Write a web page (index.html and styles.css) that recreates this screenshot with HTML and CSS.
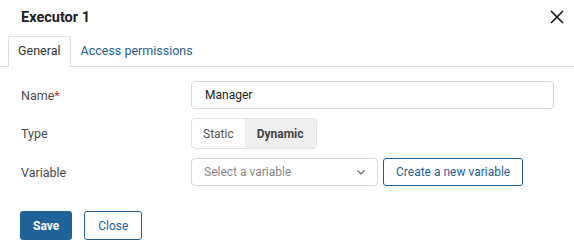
FILE: index.html
```html
<!DOCTYPE html>
<html lang="en">
<head>
    <meta charset="UTF-8">
    <title>Executor 1</title>
    <link rel="stylesheet" href="styles.css">
</head>
<body>

<div class="dialog">
    <div class="header">
        <h2>Executor 1</h2>
        <button class="close-x" aria-label="Close">
            <svg width="14" height="14" viewBox="0 0 14 14">
                <path d="M1 1 L13 13 M13 1 L1 13" stroke="#111" stroke-width="1.6" fill="none"/>
            </svg>
        </button>
    </div>

    <div class="tabs">
        <div class="tab active">General</div>
        <div class="tab">Access permissions</div>
    </div>

    <div class="form">
        <div class="row">
            <label>Name<span class="req">*</span></label>
            <input class="input" type="text" value="Manager">
        </div>
        <div class="row">
            <label>Type</label>
            <div class="segment">
                <span class="seg">Static</span>
                <span class="seg selected">Dynamic</span>
            </div>
        </div>
        <div class="row">
            <label>Variable</label>
            <div class="controls">
                <div class="select">
                    <span>Select a variable</span>
                    <svg width="8" height="5" viewBox="0 0 8 5">
                        <path d="M0.5 0.5 L4 4 L7.5 0.5" stroke="#666" stroke-width="1.1" fill="none"/>
                    </svg>
                </div>
                <button class="btn-outline">Create a new variable</button>
            </div>
        </div>
    </div>

    <div class="footer">
        <button class="btn-primary">Save</button>
        <button class="btn-secondary">Close</button>
    </div>
</div>

</body>
</html>
```

FILE: styles.css
```css
body {
    margin: 0;
    font-family: Roboto, 'Liberation Sans', Arial, sans-serif;
    font-size: 12px;
    color: #333;
    background: #ffffff;
}
.dialog {
    width: 574px;
    height: 240px;
    overflow: hidden;
}
.header {
    display: flex;
    justify-content: space-between;
    align-items: center;
    height: 34px;
    padding: 0 9px 0 21px;
}
.header h2 {
    margin: 0;
    font-size: 14.5px;
    font-weight: 700;
    color: #222;
}
.close-x {
    border: none;
    background: none;
    padding: 0;
    width: 16px;
    height: 16px;
    display: flex;
    align-items: center;
    justify-content: center;
}
.tabs {
    display: flex;
    padding: 2px 0 0 8px;
    border-bottom: 1px solid #dedede;
}
.tab {
    padding: 0 9px;
    height: 29px;
    line-height: 28px;
    font-size: 12.5px;
    color: #1f5f93;
    border: 1px solid transparent;
    border-bottom: none;
}
.tab.active {
    color: #333;
    border-color: #dedede;
    border-radius: 3px 3px 0 0;
    background: #fff;
    margin-bottom: -1px;
    height: 30px;
}
.form {
    padding: 14px 20px 0 21px;
    display: flex;
    flex-direction: column;
    gap: 9px;
}
.row {
    display: flex;
    align-items: center;
}
.row label {
    width: 170px;
    font-size: 12.5px;
    color: #4a4a4a;
}
.req {
    color: #c0392b;
}
.input {
    width: 363px;
    height: 28px;
    box-sizing: border-box;
    border: 1px solid #d6d6d6;
    border-radius: 4px;
    padding: 0 13px;
    font-family: inherit;
    font-size: 12px;
    color: #222;
}
.segment {
    display: flex;
    border: 1px solid #e2e2e2;
    border-radius: 4px;
    overflow: hidden;
    height: 31px;
    box-sizing: border-box;
}
.seg {
    display: flex;
    align-items: center;
    padding: 0 11px;
    color: #555;
}
.seg.selected {
    background: #efefef;
    font-weight: 700;
    color: #444;
    padding: 0 12px;
}
.controls {
    display: flex;
    gap: 5px;
}
.select {
    width: 187px;
    height: 28px;
    box-sizing: border-box;
    border: 1px solid #d6d6d6;
    border-radius: 4px;
    display: flex;
    align-items: center;
    justify-content: space-between;
    padding: 0 12px 0 12px;
    color: #888;
}
.btn-outline {
    height: 28px;
    padding: 0 12px;
    border: 1px solid #1f5f93;
    border-radius: 3px;
    background: #fff;
    color: #1f5f93;
    font-family: inherit;
    font-size: 12px;
}
.footer {
    display: flex;
    gap: 12px;
    padding: 25px 20px 0;
}
.btn-primary {
    height: 29px;
    padding: 0 13px;
    border: none;
    border-radius: 3px;
    background: #1f6399;
    color: #fff;
    font-weight: 700;
    font-family: inherit;
    font-size: 12px;
}
.btn-secondary {
    height: 29px;
    padding: 0 13px;
    border: 1px solid #1f5f93;
    border-radius: 3px;
    background: #fff;
    color: #1f5f93;
    font-family: inherit;
    font-size: 12px;
}
```
